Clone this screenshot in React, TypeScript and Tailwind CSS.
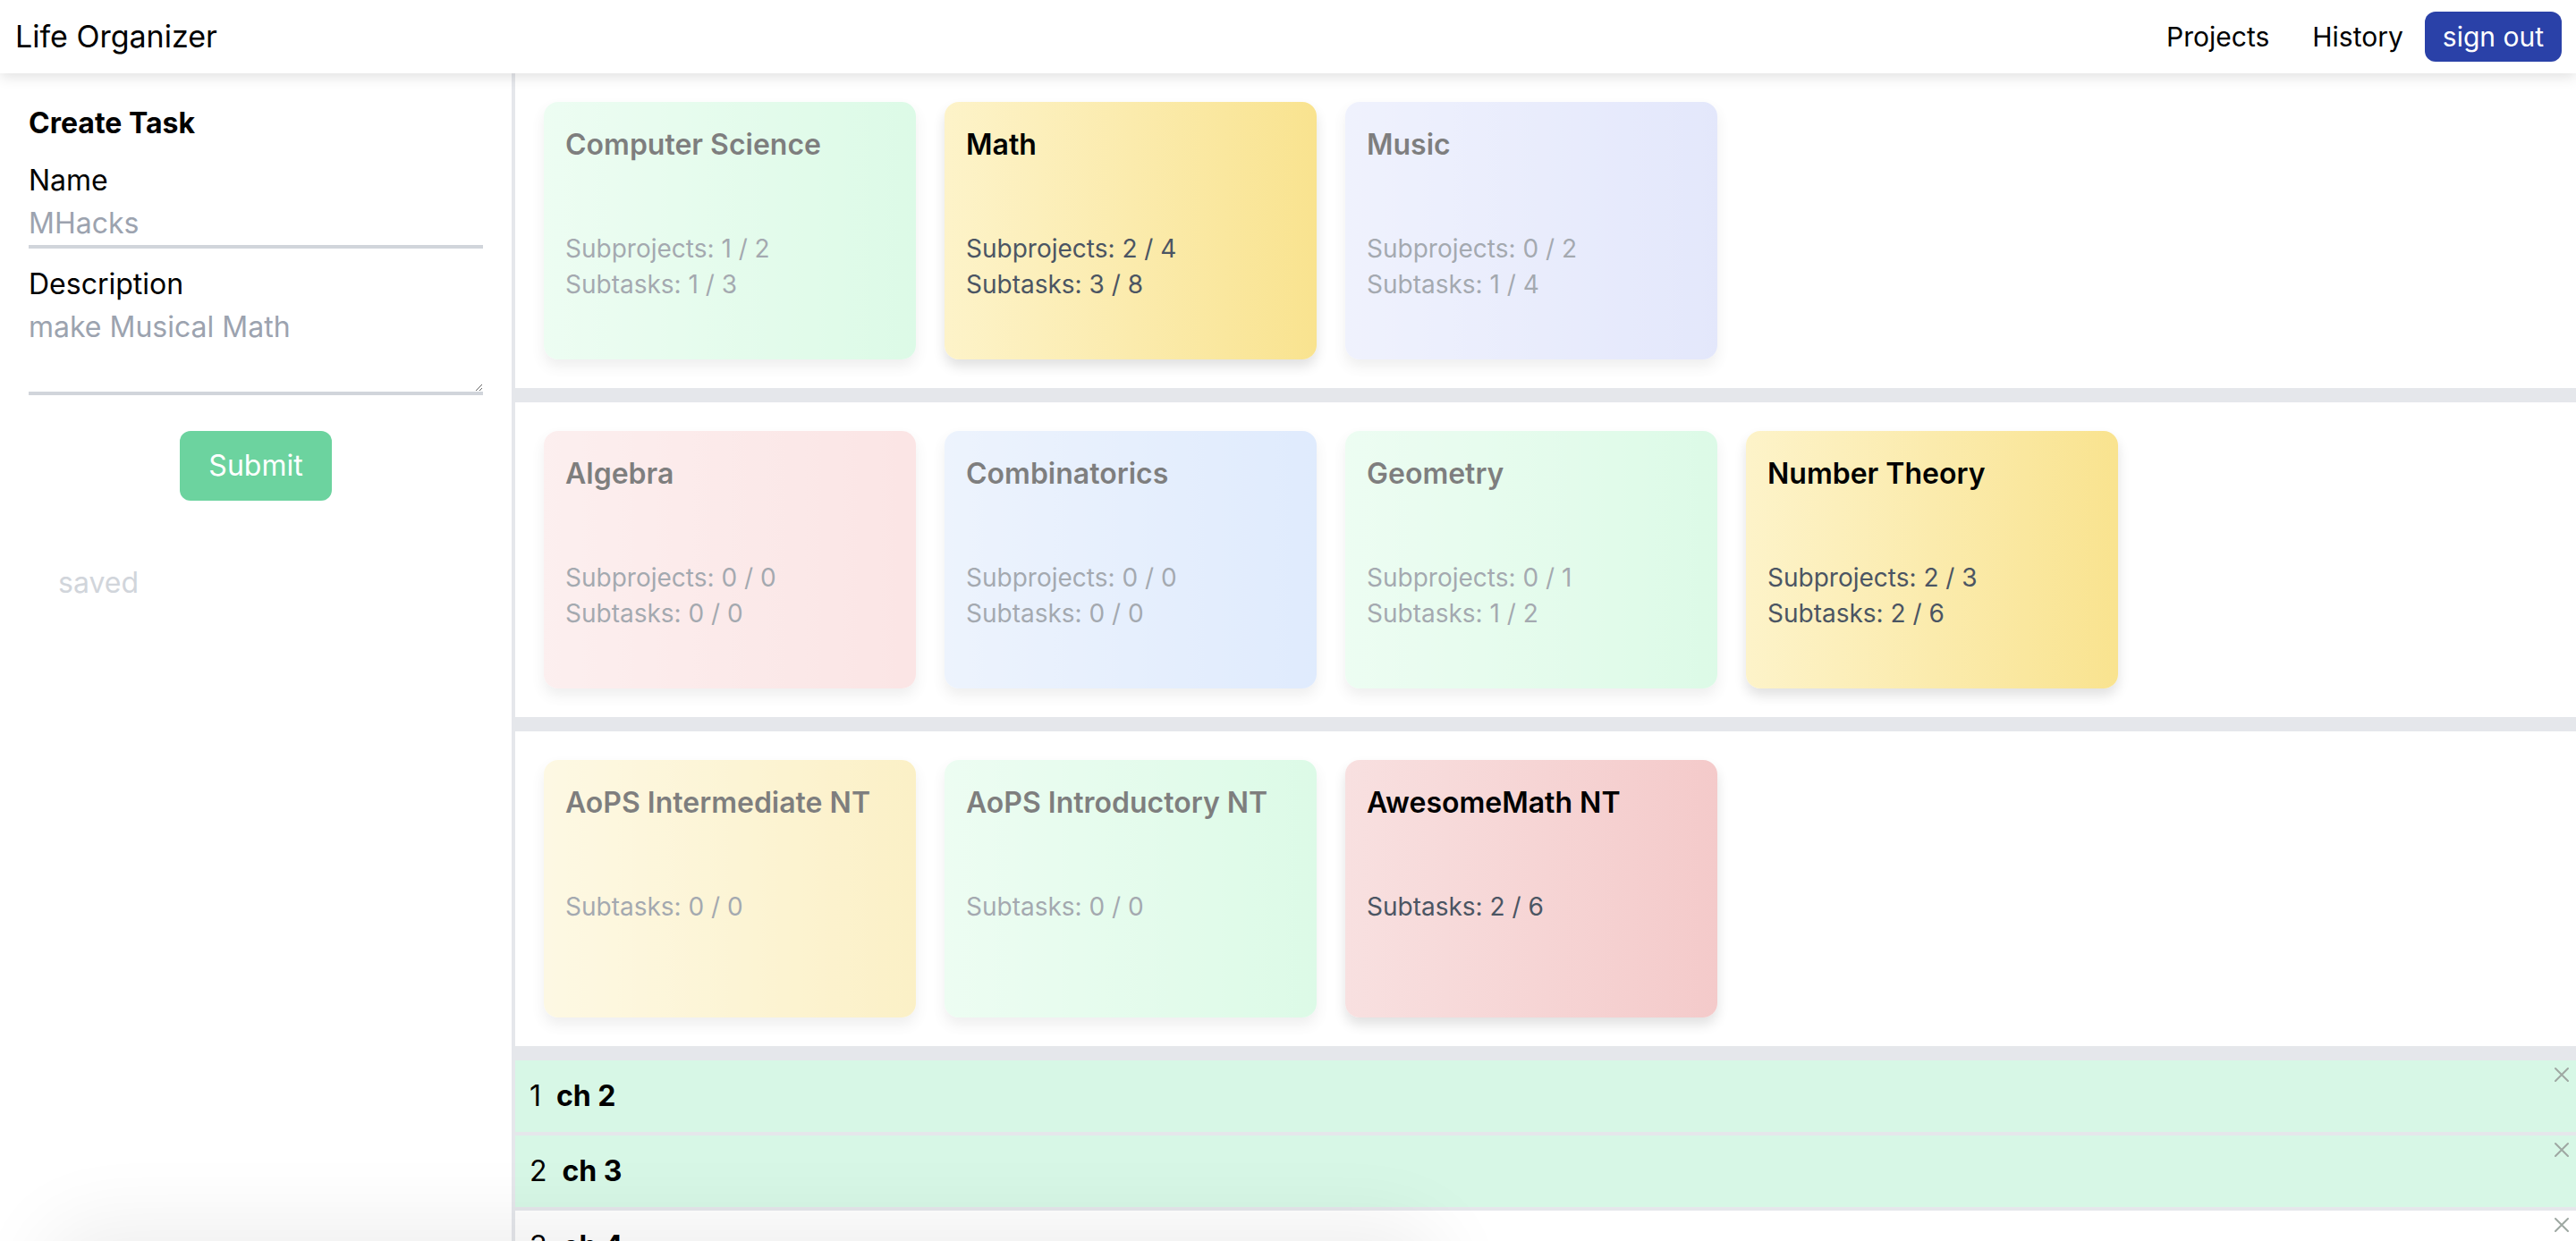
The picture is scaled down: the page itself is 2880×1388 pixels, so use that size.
import React from 'react'

type Project = {
  name: string
  subprojects?: string
  subtasks: string
  from: string
  to: string
  active?: boolean
}

const rows: Project[][] = [
  [
    { name: 'Computer Science', subprojects: '1 / 2', subtasks: '1 / 3', from: 'from-[#dcfce7]', to: 'to-[#bbf7d0]' },
    { name: 'Math', subprojects: '2 / 4', subtasks: '3 / 8', from: 'from-[#fdf3c9]', to: 'to-[#f9e38f]', active: true },
    { name: 'Music', subprojects: '0 / 2', subtasks: '1 / 4', from: 'from-[#e1e6fd]', to: 'to-[#c9d1f9]' },
  ],
  [
    { name: 'Algebra', subprojects: '0 / 0', subtasks: '0 / 0', from: 'from-[#fbe0e0]', to: 'to-[#f8cccc]' },
    { name: 'Combinatorics', subprojects: '0 / 0', subtasks: '0 / 0', from: 'from-[#dce9fd]', to: 'to-[#c1d8fc]' },
    { name: 'Geometry', subprojects: '0 / 1', subtasks: '1 / 2', from: 'from-[#dcfce7]', to: 'to-[#bbf7d0]' },
    { name: 'Number Theory', subprojects: '2 / 3', subtasks: '2 / 6', from: 'from-[#fdf3c9]', to: 'to-[#f9e38f]', active: true },
  ],
  [
    { name: 'AoPS Intermediate NT', subtasks: '0 / 0', from: 'from-[#fdf3c9]', to: 'to-[#f9e38f]' },
    { name: 'AoPS Introductory NT', subtasks: '0 / 0', from: 'from-[#dcfce7]', to: 'to-[#bbf7d0]' },
    { name: 'AwesomeMath NT', subtasks: '2 / 6', from: 'from-[#f8e0e0]', to: 'to-[#f4caca]', active: true },
  ],
]

const tasks = [
  { n: 1, name: 'ch 2', done: true },
  { n: 2, name: 'ch 3', done: true },
  { n: 3, name: 'ch 4', done: false },
]

// close icon on the task rows
const CloseIcon = () => (
  <svg viewBox="0 0 18 18" className="w-[18px] h-[18px]" fill="none" stroke="#9ea8a2" strokeWidth="2" strokeLinecap="round">
    <path d="M2 2 L16 16 M16 2 L2 16" />
  </svg>
)

const ProjectCard: React.FC<{ p: Project }> = ({ p }) => (
  <div
    className={`w-[416px] h-[288px] shrink-0 rounded-[16px] p-[24px] bg-linear-to-r ${p.from} ${p.to} shadow-[0_8px_14px_rgba(0,0,0,0.12)] ${p.active ? '' : 'opacity-50'}`}
  >
    <div className="text-[32px] leading-[48px] font-semibold text-black">{p.name}</div>
    <div className="mt-[72px] text-[28px] leading-[40px] text-[#4b5563]">
      {p.subprojects && <div>Subprojects: {p.subprojects}</div>}
      <div>Subtasks: {p.subtasks}</div>
    </div>
  </div>
)

export default function App() {
  return (
    <div className="h-screen overflow-hidden flex flex-col bg-white text-black font-['Inter',sans-serif]">
      {/* navbar */}
      <nav className="relative z-10 h-[82px] shrink-0 flex items-center justify-between pl-[17px] pr-[16px] bg-white shadow-[0_4px_14px_rgba(0,0,0,0.12)]">
        <div className="text-[34px] leading-[48px]">Life Organizer</div>
        <div className="flex items-center">
          <a className="px-[24px] text-[30px] leading-[48px]">Projects</a>
          <a className="px-[24px] text-[30px] leading-[48px]">History</a>
          <button className="h-[56px] px-[20px] rounded-[12px] bg-[#2a41a8] text-white text-[30px] leading-[48px]">sign out</button>
        </div>
      </nav>

      <div className="flex flex-1 min-h-0">
        {/* sidebar form */}
        <aside className="w-[576px] shrink-0 border-r-4 border-[#e5e7eb] px-[32px] pt-[32px]">
          <h2 className="text-[32px] leading-[48px] font-bold">Create Task</h2>
          <label className="block mt-[16px] text-[32px] leading-[48px]">Name</label>
          <input
            className="block w-full border-b-4 border-[#d1d5db] text-[32px] leading-[48px] outline-none placeholder:text-[#9ca3af]"
            placeholder="MHacks"
          />
          <label className="block mt-[16px] text-[32px] leading-[48px]">Description</label>
          <textarea
            rows={2}
            className="block w-full h-[100px] border-b-4 border-[#d1d5db] text-[32px] leading-[48px] outline-none placeholder:text-[#9ca3af]"
            placeholder="make Musical Math"
          />
          <div className="flex justify-center mt-[40px]">
            <button className="px-[32px] py-[15px] rounded-[12px] bg-[#6cd39f] text-white text-[32px] leading-[48px]">Submit</button>
          </div>
          <div className="mt-[68px] ml-[33px] text-[32px] leading-[48px] text-[#d1d5db]">saved</div>
        </aside>

        {/* projects */}
        <main className="flex-1 min-w-0 overflow-hidden">
          {rows.map((row, i) => (
            <div key={i} className="flex gap-[32px] px-[32px] py-[32px] border-b-[16px] border-[#e5e7eb]">
              {row.map((p) => (
                <ProjectCard key={p.name} p={p} />
              ))}
            </div>
          ))}

          {tasks.map((t) => (
            <div
              key={t.n}
              className={`relative h-[84px] flex items-center pl-[16px] border-b-4 border-[#e5e7eb] text-[32px] leading-[48px] ${t.done ? 'bg-[#d7f7e6]' : 'bg-white'}`}
            >
              <span>{t.n}</span>
              <span className="ml-[17px] font-bold">{t.name}</span>
              <div className="absolute top-[7px] right-[7px]">
                <CloseIcon />
              </div>
            </div>
          ))}
        </main>
      </div>

      {/* popup sitting just under the viewport, only its shadow shows */}
      <div className="fixed left-[80px] top-[1400px] w-[1500px] h-[300px] rounded-[24px] bg-white shadow-[0_0_90px_30px_rgba(0,0,0,0.07)]" />
    </div>
  )
}
